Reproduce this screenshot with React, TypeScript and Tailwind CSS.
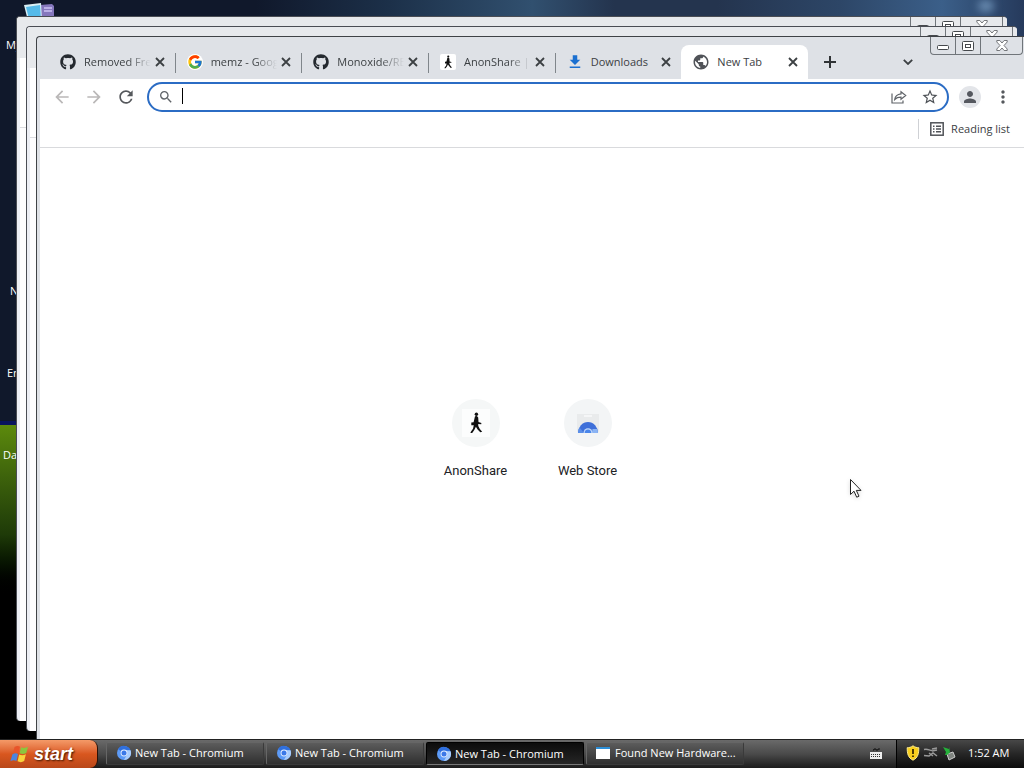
import React from 'react';
import { FaGithub } from 'react-icons/fa';
import { FcGoogle } from 'react-icons/fc';
import { MdArrowBack, MdArrowForward, MdFileDownload, MdMoreVert, MdPerson, MdPublic, MdRefresh, MdSearch, MdStarBorder } from 'react-icons/md';

interface TabItem {
  title: string;
  icon: React.ReactNode;
  active?: boolean;
  fade?: boolean;
  divider?: boolean;
}

interface TaskItem {
  label: string;
  icon: React.ReactNode;
  active?: boolean;
}

const Walker = ({ className }: { className: string }) => (
  <svg viewBox="0 0 14 22" className={className} fill="#111">
    <circle cx="7.400" cy="2.300" r="1.700" />
    <path d="M6 4.300l1.900-.4 1.300 1.500.3 4.700 2.900.9-.2 1.200-3-.2.100 2 1.500 3 2.400 2.700-1.900.6-2.700-2.900-1.700-2.600-1.600 3.300L3.200 21H1.400l.6-1.600 2-2.700.8-3.400H2.300V10.500l2.300-.3z" />
  </svg>
);

const Chromium = ({ className }: { className: string }) => (
  <svg viewBox="0 0 16 16" className={className}>
    <circle cx="8" cy="8" r="7" fill="#5d9bf7" />
    <path d="M8 8L2 4.300A7 7 0 0 1 14.500 5.200H8z" fill="#2f6fde" />
    <path d="M8 15a7 7 0 0 0 6.500-9.800H10L11 9.600z" fill="#a9cdfd" />
    <circle cx="8" cy="8" r="3.400" fill="#e3eeff" />
    <circle cx="8" cy="8" r="2.500" fill="#3b78e7" />
  </svg>
);

const CloseIcon = () => (
  <svg viewBox="0 0 10 10" className="w-[10px] h-[10px]" stroke="#3c4043" strokeWidth="1.800">
    <path d="M1 1l8 8M9 1L1 9" />
  </svg>
);

const tabs: TabItem[] = [
  { title: 'Removed Fre', icon: <FaGithub className="w-4 h-4 text-[#24292f]" />, fade: true, divider: true },
  { title: 'memz - Goog', icon: <span className="bg-white rounded-full"><FcGoogle className="w-4 h-4" /></span>, fade: true, divider: true },
  { title: 'Monoxide/RE', icon: <FaGithub className="w-4 h-4 text-[#24292f]" />, fade: true, divider: true },
  { title: 'AnonShare |', icon: <span className="bg-white rounded-xs"><Walker className="w-4 h-4 p-px" /></span>, fade: true, divider: true },
  { title: 'Downloads', icon: <MdFileDownload className="w-[18px] h-[18px] -mx-px text-[#1a6fd0]" /> },
  { title: 'New Tab', icon: <MdPublic className="w-[18px] h-[18px] -mx-px text-[#505358]" />, active: true },
];

const tasks: TaskItem[] = [
  { label: 'New Tab - Chromium', icon: <Chromium className="w-4 h-4" /> },
  { label: 'New Tab - Chromium', icon: <Chromium className="w-4 h-4" /> },
  { label: 'New Tab - Chromium', icon: <Chromium className="w-4 h-4" />, active: true },
  { label: 'Found New Hardware...', icon: <span className="w-[14px] h-3 mr-[2px] bg-white border-t-2 border-[#2d8fd8]" /> },
];

const WindowControls = () => (
  <div className="flex h-[18px] w-[93px] border border-t-0 border-[#70757a] rounded-b-sm divide-x divide-[#70757a]">
    <button aria-label="Minimize" className="w-[25px] flex justify-center items-center">
      <svg viewBox="0 0 12 5" className="w-3 h-[5px] mt-1" fill="#fff" stroke="#45484c">
        <rect x=".5" y=".5" width="11" height="4" rx="1" />
      </svg>
    </button>
    <button aria-label="Maximize" className="w-[25px] flex justify-center items-center">
      <svg viewBox="0 0 12 10" className="w-3 h-[10px]" fill="#fff" stroke="#45484c">
        <rect x=".5" y=".5" width="11" height="9" rx="1" />
        <rect x="3.500" y="3.500" width="5" height="3" />
      </svg>
    </button>
    <button aria-label="Close" className="flex-1 flex justify-center items-center">
      <svg viewBox="0 0 12 11" className="w-3 h-[11px]" fill="#fff" stroke="#55585c" strokeWidth=".8">
        <path d="M.8.500h3L6 3 8.200.500h3v1.500L8 5.500l3.200 3.500v1.500h-3L6 8l-2.200 2.500h-3V9L4 5.500.8 2z" />
      </svg>
    </button>
  </div>
);

// Inactive windows stacked behind the browser
const BackWindow = ({ className }: { className: string }) => (
  <div className={`absolute flex flex-col rounded-t-sm rounded-b-sm border-l border-t border-[#4a4d54] bg-[#eceef4] overflow-hidden ${className}`}>
    <div className="h-[41px] shrink-0 bg-[#e7e9ec] flex justify-end pr-1">
      <WindowControls />
    </div>
    <div className="h-[70px] shrink-0 ml-[3px] bg-white border-b border-[#dcdde0]" />
    <div className="flex-1 ml-[3px] bg-[#fdfdfe]" />
  </div>
);

const Tab = ({ title, icon, active, fade, divider }: TabItem) => (
  <div className={`relative flex flex-1 min-w-0 items-center pl-3 pr-[10px] h-[34px] ${active ? 'bg-white rounded-t-lg' : ''}`}>
    <span className="shrink-0 flex">{icon}</span>
    <span className={`ml-2 flex-1 overflow-hidden whitespace-nowrap text-[11px] text-[#3c4043] ${fade ? '[mask-image:linear-gradient(to_right,#000_65%,transparent)]' : ''}`}>{title}</span>
    <button aria-label={`Close ${title}`} className="ml-1 shrink-0"><CloseIcon /></button>
    {divider && <span className="absolute -right-px top-2 h-5 w-px bg-[#80868b]" />}
  </div>
);

const Browser = () => (
  <section className="absolute left-9 top-9 -right-[3px] bottom-0 flex flex-col rounded-tl-sm border-l border-t border-[#3f4246] bg-[#dee1e6] pl-[3px]">
    <header className="flex h-[42px] items-end pl-2 pr-1">
      <nav className="flex flex-1 max-w-[760px]">
        {tabs.map((tab, i) => <Tab key={i} {...tab} />)}
      </nav>
      <button aria-label="New tab" className="h-[34px] ml-4">
        <svg viewBox="0 0 12 12" className="w-3 h-3" stroke="#303336" strokeWidth="2"><path d="M6 0v12M0 6h12" /></svg>
      </button>
      <button aria-label="Search tabs" className="h-[34px] ml-auto mr-[17px]">
        <svg viewBox="0 0 10 6" className="w-[10px] h-[6px]" fill="none" stroke="#3c4043" strokeWidth="1.800"><path d="M.8.800L5 5 9.200.800" /></svg>
      </button>
      <div className="self-start"><WindowControls /></div>
    </header>

    <div className="flex h-9 items-center bg-white pl-3 pr-[14px]">
      <button aria-label="Back" className="w-5 mr-3"><MdArrowBack className="w-5 h-5 text-[#bab8b8]" /></button>
      <button aria-label="Forward" className="w-5 mr-3"><MdArrowForward className="w-5 h-5 text-[#bab8b8]" /></button>
      <button aria-label="Reload" className="w-5 mr-[11px]"><MdRefresh className="w-5 h-5 text-[#55585c]" /></button>
      <div className="flex flex-1 h-[30px] items-center border-2 border-[#2b6cc4] rounded-full pl-[9px] pr-2">
        <MdSearch className="w-4 h-4 text-[#5f6368]" />
        <input aria-label="Address" autoFocus className="flex-1 min-w-0 ml-2 mb-[2px] h-4 text-sm outline-none caret-transparent border-l border-black" />
        <button aria-label="Share" className="mr-[14px]">
          <svg viewBox="0 0 16 16" className="w-4 h-4" fill="none" stroke="#5f6368" strokeWidth="1.200">
            <path d="M1 4.500v9.500h11v-2.500" />
            <path d="M10 2.800l4.700 3.700L10 10.200V8.200c-2.600 0-4.600.5-6.300 2.300.4-3.200 2.800-5.200 6.300-5.600z" />
          </svg>
        </button>
        <button aria-label="Bookmark"><MdStarBorder className="w-[18px] h-[18px] text-[#4d5156]" /></button>
      </div>
      <button aria-label="Profile" className="ml-[10px] w-[22px] h-[22px] rounded-full bg-[#e3e5e9] flex items-center justify-center">
        <MdPerson className="w-[18px] h-[18px] text-[#55585f]" />
      </button>
      <button aria-label="Menu" className="ml-3"><MdMoreVert className="w-5 h-5 text-[#55585c]" /></button>
    </div>

    <div className="flex h-[33px] justify-end bg-white border-b border-[#d9dadd] pt-1 pr-[17px]">
      <div className="flex h-5 items-center border-l border-[#cfd1d5] pl-[11px]">
        <svg viewBox="0 0 14 14" className="w-[14px] h-[14px]" fill="none" stroke="#505358" strokeWidth="1.500">
          <rect x=".8" y=".8" width="12.400" height="12.400" />
          <path d="M3 4.200h1.500M3 7h1.500M3 9.800h1.500M6 4.200h5M6 7h5M6 9.800h5" />
        </svg>
        <button className="ml-[7px] text-[11px] text-[#3c4043]">Reading list</button>
      </div>
    </div>

    <main className="flex flex-1 justify-center items-start bg-white pt-[251px] pr-1">
      <a href="#anonshare" className="flex w-28 flex-col items-center">
        <span className="w-12 h-12 rounded-full bg-[#f5f7f7] flex items-center justify-center">
          <span className="w-7 h-7 bg-[#fcfdfd] flex items-center justify-center"><Walker className="w-[14px] h-[22px]" /></span>
        </span>
        <span className="mt-[15px] font-['Roboto',sans-serif] text-[13px] leading-[18px] text-[#202124]">AnonShare</span>
      </a>
      <a href="#webstore" className="flex w-28 flex-col items-center">
        <span className="w-12 h-12 rounded-full bg-[#f3f5f6] flex items-center justify-center">
          <svg viewBox="0 0 24 24" className="w-6 h-6">
            <path d="M1 3h22v17a2 2 0 0 1-2 2H3a2 2 0 0 1-2-2z" fill="#e9ebec" />
            <path d="M8 5h8" stroke="#f5f6f7" strokeWidth="2" />
            <path d="M2 22a10 11 0 0 1 20 0z" fill="#3e6fd9" />
            <path d="M16.500 18h4.500a10 11 0 0 1 1 4h-6z" fill="#8bb4f4" />
            <path d="M2 22a10 11 0 0 1 1.500-5.500L8 22z" fill="#5b8fe8" />
            <path d="M7.500 22a4.500 4.800 0 0 1 9 0z" fill="#c3dafb" />
            <path d="M8.700 22a3.300 3.600 0 0 1 6.600 0z" fill="#4a86ea" />
          </svg>
        </span>
        <span className="mt-[15px] font-['Roboto',sans-serif] text-[13px] leading-[18px] text-[#202124]">Web Store</span>
      </a>
    </main>
  </section>
);

const Taskbar = () => (
  <footer className="relative flex h-[29px] shrink-0 border-t border-[#222] bg-linear-to-b from-[#6a6a6a] via-[#4a4a4a] to-[#1c1c1c] text-[11px] text-white">
    <button className="flex w-[98px] items-center pl-2 pb-px rounded-r-lg border-r border-[#2a1208] bg-linear-to-b from-[#f49a68] via-[#d9571f] to-[#b9481a]">
      <svg viewBox="0 0 22 20" className="w-[22px] h-5">
        <path d="M6.500 3c2-1.300 4-1.200 5.500-.3L10.500 9C9 8 7 8 5 9.200z" fill="#e8552a" />
        <path d="M13 3.200c2 1 4.500 1 7-.4L18.300 9c-2.200 1.400-4.700 1.300-6.700.3z" fill="#8cc63e" />
        <path d="M4.500 10.300c2-1.200 4-1.200 5.500-.2L8.400 17c-1.700-1-3.900-1-6 .2z" fill="#4b85e0" />
        <path d="M11.200 10.500c2 1 4.500 1 6.700-.2l-1.700 6.800c-2.200 1.400-4.600 1.300-6.600.2z" fill="#f8d33c" />
      </svg>
      <span className="ml-1 font-['Liberation_Sans',sans-serif] text-lg leading-5 font-bold italic [text-shadow:1px_1px_2px_#3a1500]">start</span>
    </button>
    <div className="flex flex-1 gap-[2px] pl-2 pt-[2px] pb-[3px]">
      {tasks.map((task, i) => (
        <button
          key={i}
          className={`flex w-[158px] items-center rounded-xs border pl-[9px] text-left whitespace-nowrap ${task.active ? 'border-black border-b-[#777] bg-linear-to-b from-[#0c0c0c] to-[#262626] pt-px' : 'border-[#3a3a3a] border-t-[#666] border-l-[#666] bg-linear-to-b from-[#5c5c5c] to-[#303030] pb-px'}`}
        >
          {task.icon}
          <span className="ml-[3px]">{task.label}</span>
        </button>
      ))}
    </div>
    <svg viewBox="0 0 14 12" className="self-center mr-[13px] w-[14px] h-3">
      <path d="M4 2h1V1h2v1h2V1h2" fill="none" stroke="#111" />
      <rect x="1" y="4" width="12" height="7" fill="#eee" />
      <path d="M2 6.500h10M2 8.500h10" stroke="#333" strokeDasharray="1 1" />
    </svg>
    <div className="flex w-32 items-center border-l border-black bg-linear-to-b from-[#484848] via-[#262626] to-[#0c0c0c] pl-2 pb-[2px]">
      <svg viewBox="0 0 16 16" className="w-4 h-4">
        <path d="M8 .8C6 2.300 4 2.700 2.200 2.700c0 6 .8 10 5.800 12.500 5-2.500 5.800-6.500 5.800-12.500C12 2.700 10 2.300 8 .8z" fill="#f8cf1e" stroke="#fae98c" />
        <path d="M8 4v5M8 10.500V12" stroke="#3b2c00" strokeWidth="1.800" />
      </svg>
      <svg viewBox="0 0 16 16" className="ml-[2px] w-4 h-4" fill="none" stroke="#999" strokeWidth="1.500">
        <path d="M1 4.500c4-1 5 1 8 1M9 4l5-1M9 6l5-1M1 10.500l5 .5 4-3 4 3M6 8l4 3" />
      </svg>
      <svg viewBox="0 0 16 16" className="ml-[2px] w-4 h-4">
        <path d="M6 9l6-2 2 5-6 3z" fill="#808580" stroke="#ccc" />
        <path d="M2 2l6 2 0-2.500 1 6-3 2.500-2 0 1-3z" fill="#25b03a" />
      </svg>
      <time className="ml-[11px] whitespace-nowrap">1:52 AM</time>
    </div>
  </footer>
);

export default function App() {
  return (
    <div className="flex h-screen flex-col overflow-hidden bg-black font-['Open_Sans','Noto_Sans',sans-serif] leading-4">
      <div className="relative flex-1 overflow-hidden bg-[#10182b]">
        <div className="absolute inset-x-0 top-0 h-10 bg-[linear-gradient(to_right,#10182b_25%,#1c3049_38%,#31506f_52%,#24344e_60%,#24344e_70%,#2d4667_82%,#3b5f89_92%,#263a5c)]" />
        <div className="absolute right-[30px] top-0 h-3 w-4 rounded-full bg-[#8fb8dc]/60 blur-xs" />
        <div className="absolute inset-x-0 top-[421px] h-1 bg-[#08145e]" />
        <div className="absolute inset-x-0 top-[425px] bottom-0 bg-linear-to-b from-[#5c8a0c] via-[#1e3a08] via-35% to-black to-55%" />
        <svg viewBox="0 0 32 18" className="absolute left-[23px] top-[3px] w-8 h-[18px]">
          <path d="M17 2l12-1 2 2v15H17z" fill="#8577bd" />
          <path d="M21 5h8M21 8h8" stroke="#cbc2f3" strokeWidth="1.500" />
          <path d="M1 2l17-2 1 18H5z" fill="#d9eff5" />
          <path d="M3 4l14-2 1 14H6z" fill="#55baea" />
        </svg>
        <span className="absolute left-[6px] top-[37px] whitespace-nowrap text-[11px] text-white">My</span>
        <span className="absolute left-[10px] top-[283px] whitespace-nowrap text-[11px] text-white">N</span>
        <span className="absolute left-[7px] top-[365px] whitespace-nowrap text-[11px] text-white">En</span>
        <span className="absolute left-[3px] top-[447px] whitespace-nowrap text-[11px] text-white">Da</span>
        <BackWindow className="left-4 top-4 right-[17px] bottom-[18px]" />
        <BackWindow className="left-[26px] top-[26px] right-[7px] bottom-2" />
        <Browser />
        <svg viewBox="0 0 14 21" className="absolute left-[849px] top-[478px] w-[14px] h-[21px] drop-shadow-sm" fill="#fff" stroke="#222">
          <path d="M1.500 1.500v15l3.500-3.300 2.700 6 2.300-1-2.700-5.800h4.700z" />
        </svg>
      </div>
      <Taskbar />
    </div>
  );
}
